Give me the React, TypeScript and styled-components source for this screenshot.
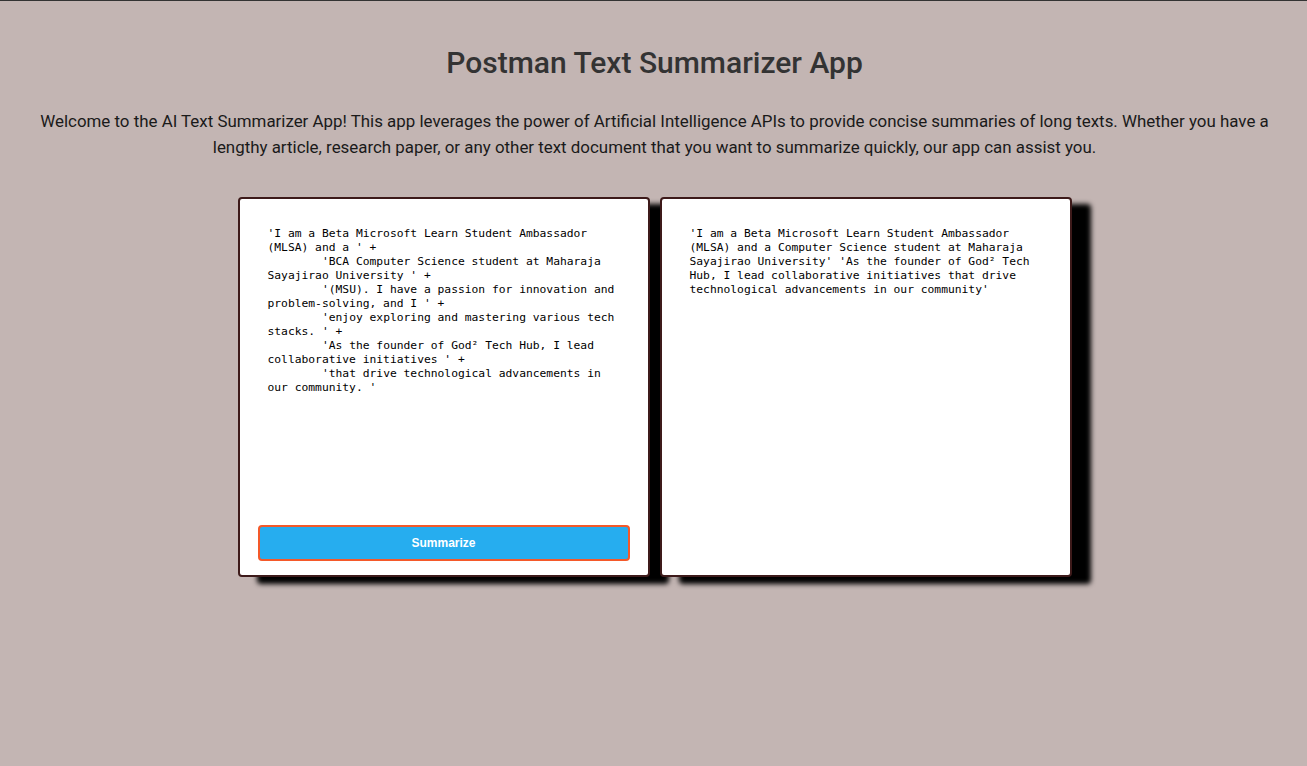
import styled, { createGlobalStyle } from "styled-components";

const inputText =
  "'I am a Beta Microsoft Learn Student Ambassador (MLSA) and a ' +\n" +
  "        'BCA Computer Science student at Maharaja Sayajirao University ' +\n" +
  "        '(MSU). I have a passion for innovation and problem-solving, and I ' +\n" +
  "        'enjoy exploring and mastering various tech stacks. ' +\n" +
  "        'As the founder of God² Tech Hub, I lead collaborative initiatives ' +\n" +
  "        'that drive technological advancements in our community. '";

const summary =
  "'I am a Beta Microsoft Learn Student Ambassador (MLSA) and a Computer Science student at Maharaja Sayajirao University' 'As the founder of God² Tech Hub, I lead collaborative initiatives that drive technological advancements in our community'";

const App = () => {
  return (
    <>
      <GlobalStyle />
      <Page>
        <Title>Postman Text Summarizer App</Title>
        <Intro>
          Welcome to the AI Text Summarizer App! This app leverages the power of Artificial
          Intelligence APIs to provide concise summaries of long texts. Whether you have a lengthy
          article, research paper, or any other text document that you want to summarize quickly,
          our app can assist you.
        </Intro>
        <Panels>
          <Card>
            <TextInput defaultValue={inputText} spellCheck={false} />
            <SubmitButton type="button">Summarize</SubmitButton>
          </Card>
          <Card>
            <Output>{summary}</Output>
          </Card>
        </Panels>
      </Page>
    </>
  );
};

const GlobalStyle = createGlobalStyle`
  * {
    box-sizing: border-box;
  }
  html, body {
    margin: 0;
    padding: 0;
    background-color: #c3b5b3;
  }
`;

const Page = styled.div`
  min-height: 766px;
  border-top: 1px solid #333;
  padding: 44px 19px 40px 21px;
  font-family: Roboto, "Liberation Sans", sans-serif;
  display: flex;
  flex-direction: column;
  align-items: center;
`;

const Title = styled.h1`
  margin: 0;
  font-size: 30px;
  line-height: 36px;
  font-weight: 500;
  color: #333;
  text-align: center;
`;

const Intro = styled.p`
  margin: 27px 0 0;
  font-size: 16.9px;
  line-height: 26px;
  color: #1a1a1a;
  text-align: center;
`;

const Panels = styled.div`
  display: flex;
  gap: 10px;
  margin-top: 37px;
`;

const Card = styled.div`
  width: 412px;
  height: 380px;
  background-color: #fff;
  border: 2px solid #3d1a1a;
  border-radius: 4px;
  padding: 18px 18px 14px;
  box-shadow: 19px 7px 5px #000;
  display: flex;
  flex-direction: column;
  gap: 10px;
`;

const TextInput = styled.textarea`
  flex: 1;
  width: 100%;
  padding: 10px;
  border: none;
  outline: none;
  resize: none;
  background: #fff;
  color: #000;
  font-family: "DejaVu Sans Mono", "Liberation Mono", monospace;
  font-size: 11.3px;
  line-height: 14px;
`;

const Output = styled.div`
  padding: 10px;
  color: #000;
  font-family: "DejaVu Sans Mono", "Liberation Mono", monospace;
  font-size: 11.3px;
  line-height: 14px;
  white-space: pre-wrap;
`;

const SubmitButton = styled.button`
  height: 36px;
  width: 100%;
  background-color: #26adef;
  border: 2px solid #f4592a;
  border-radius: 4px;
  color: #fff;
  font-family: "Liberation Sans", Arial, sans-serif;
  font-weight: bold;
  font-size: 12px;
  cursor: pointer;
`;

export default App;
